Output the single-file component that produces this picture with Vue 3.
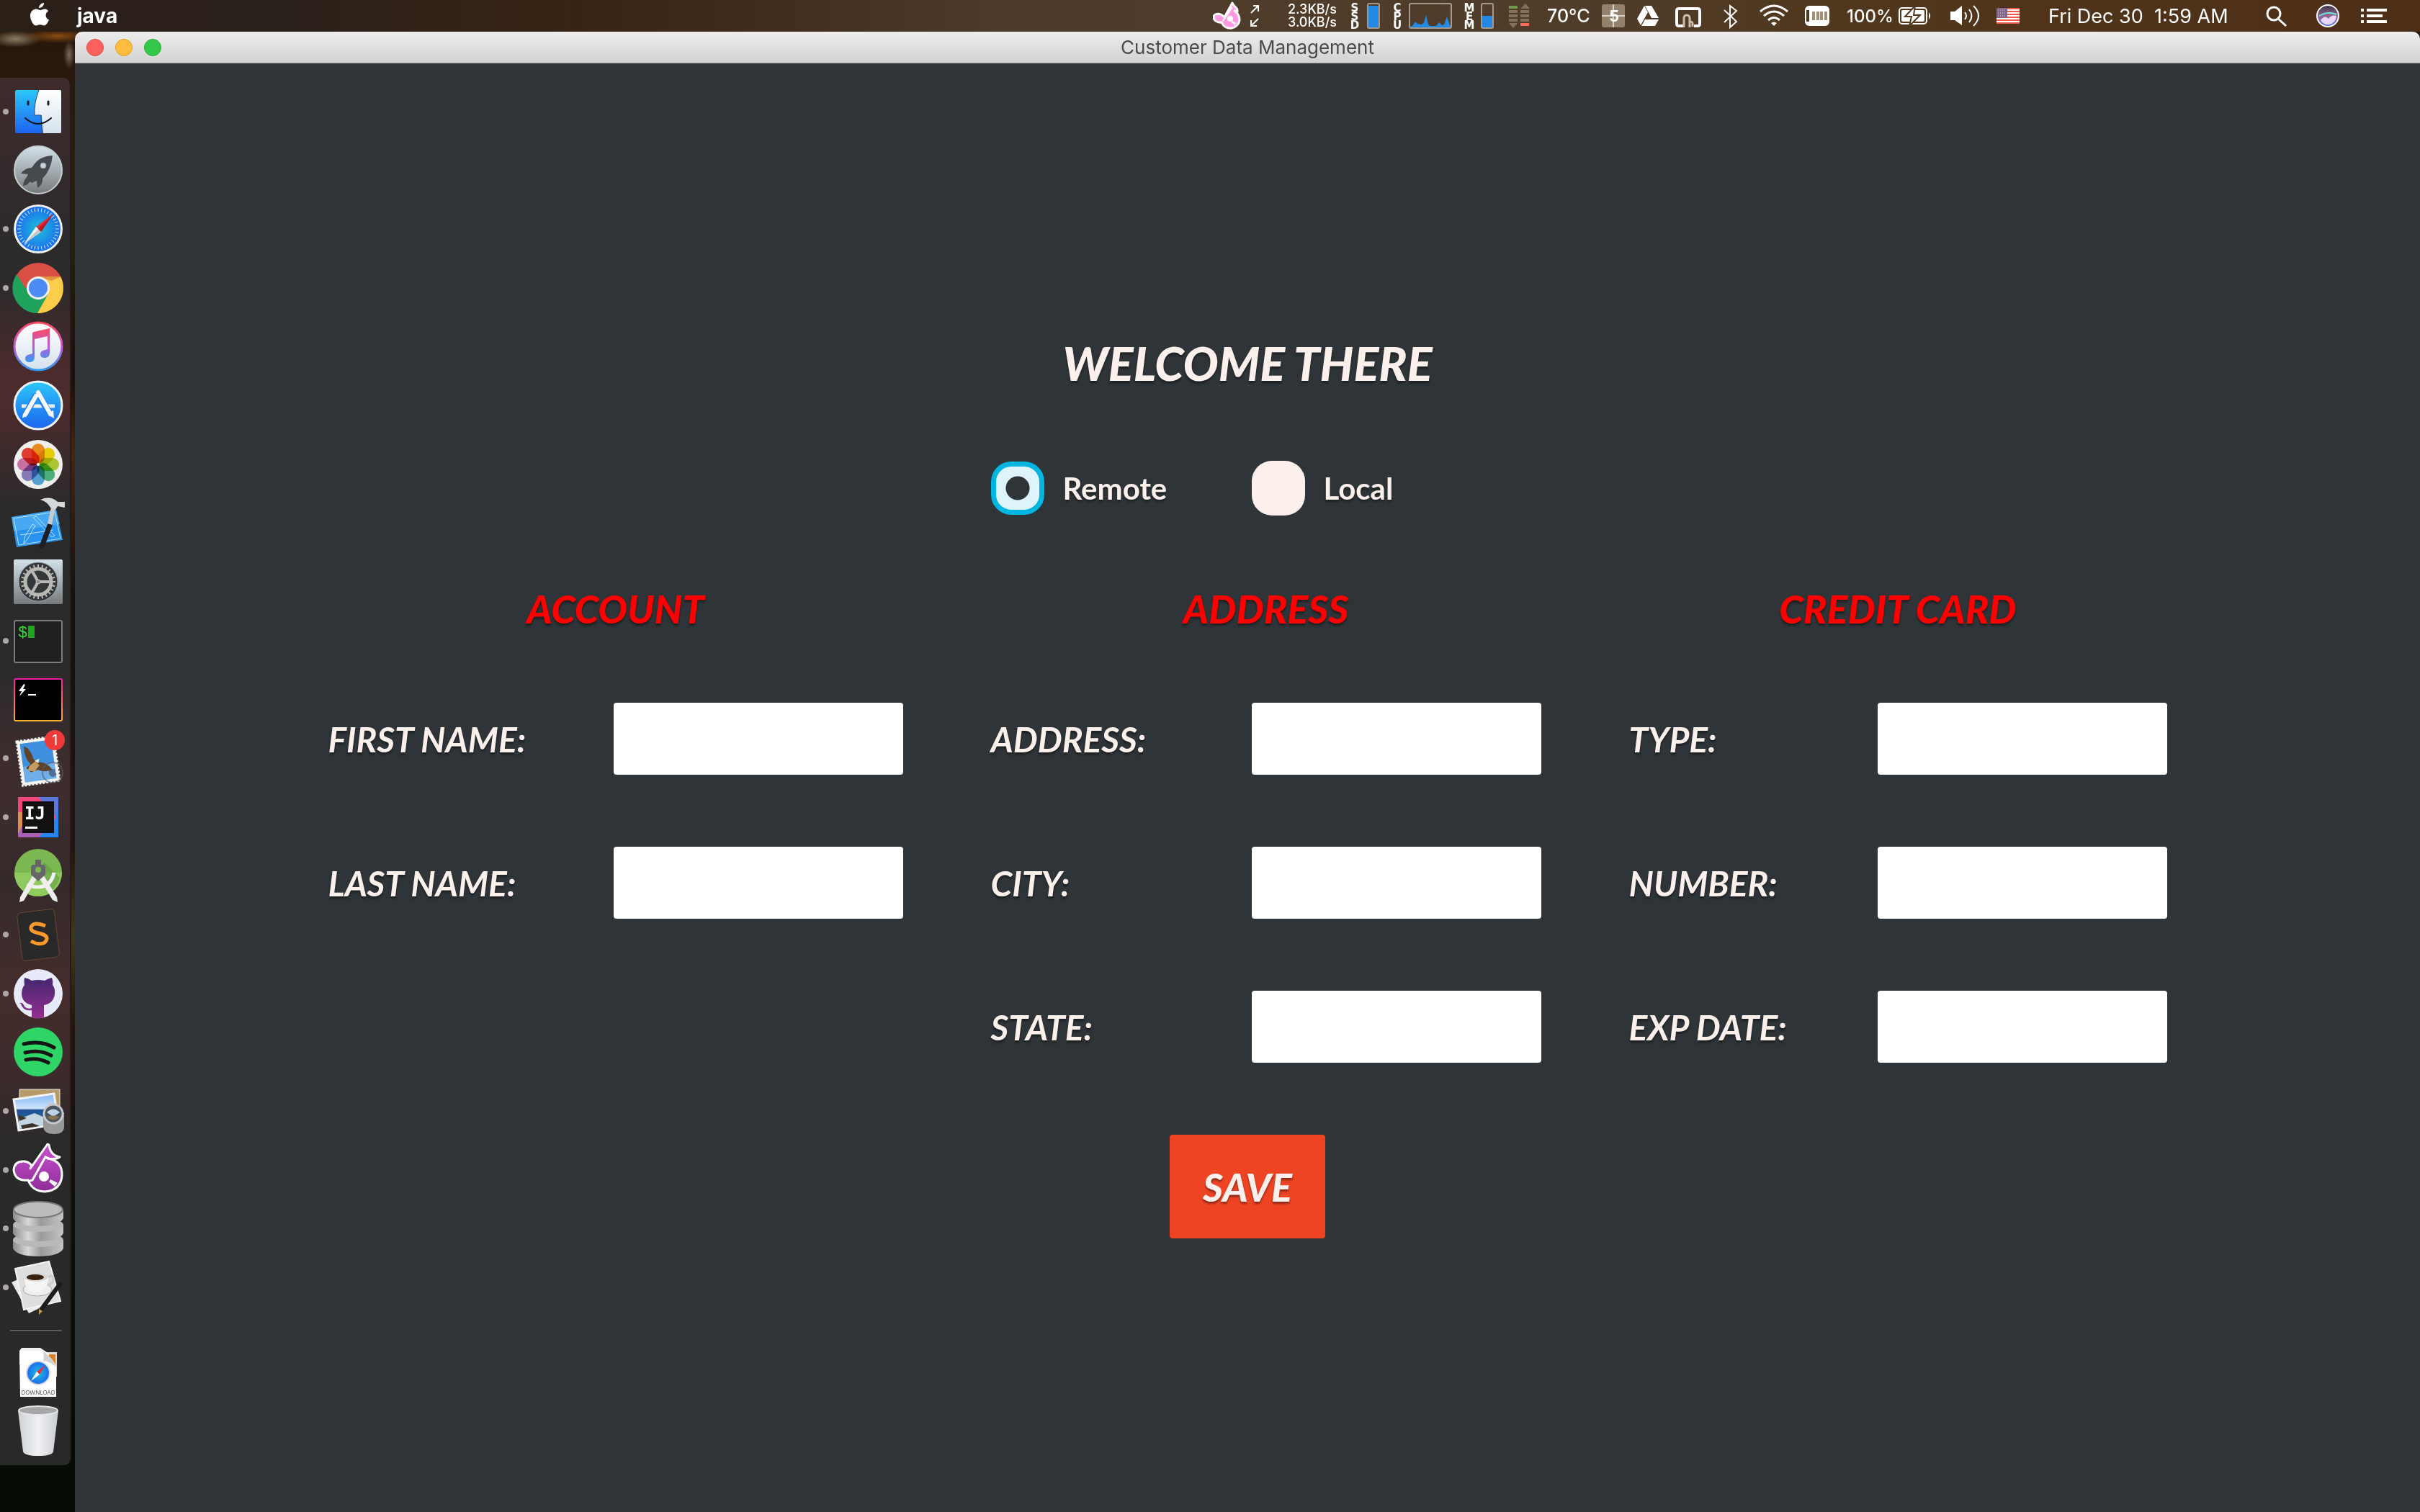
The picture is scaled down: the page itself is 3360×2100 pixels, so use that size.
<script setup>
import { ref, reactive } from 'vue'

const source = ref('remote')

const groups = reactive([
  {
    id: 'account',
    title: 'ACCOUNT',
    fields: [
      { id: 'first-name', label: 'FIRST NAME:', value: '' },
      { id: 'last-name', label: 'LAST NAME:', value: '' }
    ]
  },
  {
    id: 'address',
    title: 'ADDRESS',
    fields: [
      { id: 'street', label: 'ADDRESS:', value: '' },
      { id: 'city', label: 'CITY:', value: '' },
      { id: 'state', label: 'STATE:', value: '' }
    ]
  },
  {
    id: 'card',
    title: 'CREDIT CARD',
    fields: [
      { id: 'card-type', label: 'TYPE:', value: '' },
      { id: 'card-number', label: 'NUMBER:', value: '' },
      { id: 'card-exp', label: 'EXP DATE:', value: '' }
    ]
  }
])

const petals = ['#f7941e', '#f5d90a', '#b5d334', '#52b985', '#5aa9e0', '#8f83c4', '#d678b0', '#ef4136']
const ticks = Array.from({ length: 36 }, (_, i) => i * 10)
const teeth = Array.from({ length: 24 }, (_, i) => i * 15)
</script>

<template>
  <div class="desktop">
    <header class="menubar">
      <svg class="apple" width="44" height="44" viewBox="0 0 44 44" aria-label="Apple">
        <path fill="#fff" d="M27 4c.3 4-3 7-7 7C20 8 23 4.300 27 4zM33 15.500c-5 3-4.500 9.500 1 12-1 3-4 8-7 8-2 0-3-1.200-5.500-1.200S18 35.500 16 35.500c-4 0-8-8-8-13.500 0-6 4-9.500 8-9.500 2.500 0 4 1.400 6 1.400s3.500-1.500 6.500-1.500c2 0 3.700 1 4.500 3.100z" />
      </svg>
      <strong class="app-name">java</strong>
      <div class="status">
        <svg width="52" height="44" viewBox="0 0 52 44">
          <path d="M16 24 27 4c2 6 8 6 7 12l-4-1c6 4 7 9 7 13a13 13 0 0 1-25 3C6 32 1 28 1 24s7-8 15 0z" fill="#ff9ae0" stroke="#fff" stroke-width="3" stroke-linejoin="round" />
          <path d="M14 29 27 10" stroke="#fff" stroke-width="2" /><circle cx="24" cy="26" r="4" fill="#fff" /><path d="m27 29 5 3-2 3-4-4z" fill="#fff" />
        </svg>
        <svg width="52" height="44" viewBox="0 0 52 44" fill="none" stroke="#fff" stroke-width="2">
          <path d="M1 18 11 8M4 8h7v8M11 26 1 36M1 28v8h8" />
        </svg>
        <div class="speeds"><span>2.3KB/s</span><span>3.0KB/s</span></div>
        <svg width="60" height="44" viewBox="0 0 60 44">
          <g class="gauge-text"><text x="9" y="16">S</text><text x="9" y="28">S</text><text x="9" y="40">D</text></g>
          <rect x="27" y="5" width="16" height="34" rx="2" class="gauge-box" /><rect x="28" y="8" width="14" height="30" fill="#2389e4" />
        </svg>
        <svg width="100" height="44" viewBox="0 0 100 44">
          <g class="gauge-text"><text x="8" y="16">C</text><text x="8" y="28">P</text><text x="8" y="40">U</text></g>
          <path fill="#2389e4" d="M25 38v-1l4-1 4-6 3 3 6 1 3-3 3-10 3 13 3 2h8l4-5 4 4 3-1 4-11 4 12 2 1v2z" />
          <rect x="25" y="5" width="58" height="34" rx="2" class="gauge-box" />
        </svg>
        <svg width="60" height="44" viewBox="0 0 60 44">
          <g class="gauge-text"><text x="8" y="16">M</text><text x="8" y="28">E</text><text x="8" y="40">M</text></g>
          <rect x="25" y="5" width="16" height="34" rx="2" class="gauge-box" /><rect x="26" y="22" width="14" height="16" fill="#2389e4" />
        </svg>
        <svg width="56" height="44" viewBox="0 0 56 44" fill="#85705b">
          <path fill="#729a4e" d="M3 8h12v4H3z" /><path d="M3 14h12v4H3zM3 20h12v4H3zM3 26h12v4H3zM3 32h12l-6 7zM19 12h13l-6-7zM19 14h12v4H19zM19 20h12v4H19zM19 26h12v4H19z" /><path fill="#ff6b57" d="M19 32h12v4H19z" />
        </svg>
        <span class="text-temp">70°C</span>
        <svg width="48" height="44" viewBox="0 0 48 44">
          <rect y="6" width="32" height="32" rx="3" fill="#94816b" /><path d="M16 6v32M0 22h32" stroke="#d9cfc4" stroke-width="2" />
          <text x="17" y="30" text-anchor="middle" class="space-text">5</text>
        </svg>
        <svg width="52" height="44" viewBox="0 0 52 44" fill="#fff">
          <path d="m11 8-10 18 5 9 10-18zM12 8h9l10 17H21zM12 27h19l-5 9H7z" />
        </svg>
        <svg width="68" height="44" viewBox="0 0 68 44" fill="none">
          <path d="M15 36H7q-3 0-3-3V15q0-3 3-3h26q3 0 3 3v18q0 3-3 3h-5" stroke="#fff" stroke-width="4" />
          <path d="M14 38V25a4 4 0 0 1 8 0v13M22 31q4-2 4 2v4" stroke="#cdbfae" stroke-width="3" />
        </svg>
        <svg width="48" height="44" viewBox="0 0 48 44" fill="none" stroke="#fff" stroke-width="2">
          <path d="m2 14 17 16-9 8V8l9 7L2 31" />
        </svg>
        <svg width="64" height="44" viewBox="0 0 64 44" fill="none" stroke="#fff" stroke-width="3">
          <path d="M4 16q19-16 38 0M9 22q14-12 28 0M15 28q8-7 16 0" /><path d="m19 32 4 4 4-4q-4-3-8 0z" fill="#fff" stroke="none" />
        </svg>
        <svg width="60" height="44" viewBox="0 0 60 44">
          <rect x="2" y="8" width="34" height="28" rx="6" fill="#fff" /><path d="M4 14h4v16H4z" fill="#50381f" />
          <path d="M12 16h4v12h-4zM18 16h4v12h-4zM23 16h4v12h-4zM29 16h4v12h-4z" fill="#a28d75" />
        </svg>
        <span class="text-charge">100%</span>
        <svg width="72" height="44" viewBox="0 0 72 44">
          <rect x="1" y="11" width="38" height="22" rx="4" fill="none" stroke="#fff" stroke-width="2" /><path d="M42 17q4 5 0 10z" fill="#fff" />
          <rect x="4" y="14" width="32" height="16" rx="2" fill="#fff" /><path d="m23 8-14 15h9l-3 13 15-15h-9z" fill="#fff" stroke="#50381f" stroke-width="2" />
        </svg>
        <svg width="64" height="44" viewBox="0 0 64 44" fill="none" stroke="#fff" stroke-width="2">
          <path d="M0 16h6l10-8v27L6 28H0z" fill="#fff" stroke="none" /><path d="M20 17q4 5 0 10M26 13q7 9 0 18M32 8q14 14 0 28" />
        </svg>
        <svg width="72" height="44" viewBox="0 0 72 44">
          <path fill="#fff" d="M0 11h32v22H0z" /><path d="M0 12h32M0 16h32M0 20h32M0 24h32M0 28h32M0 32h32" stroke="#f25a4c" stroke-width="2" />
          <path fill="#83668a" d="M0 11h15v14H0z" /><path d="M2 14h12M2 18h12M2 22h12" stroke="#e4dbe8" stroke-dasharray="1 2" />
        </svg>
        <span class="text-date">Fri Dec 30&nbsp; 1:59 AM</span>
        <svg width="70" height="44" viewBox="0 0 70 44" fill="none" stroke="#fff" stroke-width="3">
          <circle cx="11" cy="19" r="9" /><path d="m17 26 11 10" />
        </svg>
        <svg width="62" height="44" viewBox="0 0 62 44">
          <circle cx="16" cy="22" r="15" fill="url(#siri)" stroke="#fff" stroke-width="2" />
          <path d="M6 28q6-8 11-2 4-6 11-4-1 10-10 12Q10 35 6 28z" fill="#f6e2ff" opacity=".9" /><path d="M4 22q12-7 24-2" stroke="#6fe6e0" stroke-width="2" fill="none" />
        </svg>
        <svg width="82" height="44" viewBox="0 0 82 44" stroke="#fff" stroke-width="4">
          <path d="M0 14h4M8 14h28M0 22h4M8 22h22M0 30h4M8 30h28" />
        </svg>
      </div>
    </header>

    <div class="workspace">
      <nav class="dock" aria-label="Dock">
        <ul class="dock-list">
          <li class="running">
            <svg viewBox="0 0 80 82">
              <defs>
                <linearGradient id="blue" x2="0" y2="1"><stop stop-color="#2cc8fb" /><stop offset="1" stop-color="#1d63f0" /></linearGradient>
                <linearGradient id="steel" x2="0" y2="1"><stop stop-color="#d3e2ea" /><stop offset="1" stop-color="#77797b" /></linearGradient>
                <linearGradient id="white" x2="0" y2="1"><stop stop-color="#fff" /><stop offset="1" stop-color="#d5e2ee" /></linearGradient>
                <linearGradient id="tune" x2="0" y2="1"><stop stop-color="#fb4a5c" /><stop offset=".55" stop-color="#b85ce0" /><stop offset="1" stop-color="#2f9cf0" /></linearGradient>
                <linearGradient id="hyper" x2="0" y2="1"><stop stop-color="#f81fa8" /><stop offset="1" stop-color="#f5b32d" /></linearGradient>
                <linearGradient id="purple" x2="0" y2="1"><stop stop-color="#44276f" /><stop offset="1" stop-color="#93308f" /></linearGradient>
                <linearGradient id="orchid" x2="0" y2="1"><stop stop-color="#c951cf" /><stop offset="1" stop-color="#8e2d98" /></linearGradient>
                <linearGradient id="metal"><stop stop-color="#8b8b8b" /><stop offset=".3" stop-color="#d8d8d8" /><stop offset=".55" stop-color="#9a9a9a" /><stop offset="1" stop-color="#c4c4c4" /></linearGradient>
                <linearGradient id="bin"><stop stop-color="#cdd0d4" /><stop offset=".5" stop-color="#f0f1f3" /><stop offset="1" stop-color="#c9ccd1" /></linearGradient>
                <linearGradient id="sea" x2="0" y2="1"><stop stop-color="#7fb6f5" /><stop offset=".4" stop-color="#cfe4fa" /><stop offset=".45" stop-color="#1c4f93" /><stop offset="1" stop-color="#2e7fa8" /></linearGradient>
                <linearGradient id="siri" x2="0" y2="1"><stop stop-color="#3c3348" /><stop offset=".5" stop-color="#94648f" /><stop offset="1" stop-color="#5a7df0" /></linearGradient>
                <radialGradient id="compass"><stop stop-color="#1fc0d8" /><stop offset="1" stop-color="#1a6ef0" /></radialGradient>
              </defs>
              <rect x="8" y="11" width="64" height="60" rx="2" fill="url(#blue)" />
              <path d="M41 11h29q2 0 2 2v56q0 2-2 2H47q-2-12-2-25H35q-1-18 6-35z" fill="url(#white)" />
              <path d="M41 11q-7 18-6 35h9q0 13 2 25" fill="none" stroke="#294a72" stroke-width="1" />
              <path d="M26 27v4M54 27v4" stroke="#1a1a1a" stroke-width="3" stroke-linecap="round" />
              <path d="M22 50q18 16 36 0" fill="none" stroke="#111" stroke-width="2" stroke-linecap="round" />
            </svg>
          </li>
          <li>
            <svg viewBox="0 0 80 82">
              <circle cx="40" cy="41" r="33" fill="url(#steel)" stroke="#c6ced2" stroke-width="2" />
              <path fill="#454a4f" d="M60 21q-18 1-26 13l-3 4q-9 0-15 8l10 1-3 6 8 6 7-3 1 10q8-5 7-13 12-12 14-32zM26 50q-6 3-7 13 8-1 11-8z" />
              <circle cx="47" cy="35" r="4" fill="#c8d3d9" stroke="#8c979d" />
            </svg>
          </li>
          <li class="running">
            <svg viewBox="0 0 80 82">
              <circle cx="40" cy="41" r="34" fill="#eef1f4" /><circle cx="40" cy="41" r="31" fill="url(#compass)" />
              <path v-for="t in ticks" :key="t" d="M40 12v5" stroke="#cfe6fb" stroke-width="1" :transform="`rotate(${t} 40 41)`" />
              <path fill="#ed2f38" d="M61 20 37 38l7 7z" /><path fill="#fff" d="m37 38 7 7-24 17z" /><path fill="#c3c8cd" d="m40 41 4 4-24 17z" /><path fill="#b51c25" d="M61 20 40 41l4 4z" />
            </svg>
          </li>
          <li class="running">
            <svg viewBox="0 0 80 82">
              <circle cx="40" cy="41" r="35" fill="#da4f44" />
              <path fill="#1fa35c" d="M10 22a35 35 0 0 0 29 54l15-26-14-9-18 0z" /><path fill="#fccd48" d="M39 76a35 35 0 0 0 32-51H40l14 24z" />
              <path fill="#b93d33" d="m40 25 32 0-14 6z" opacity=".4" />
              <circle cx="40" cy="41" r="16" fill="#f3f3f3" /><circle cx="40" cy="41" r="13" fill="#4b8bf4" />
            </svg>
          </li>
          <li>
            <svg viewBox="0 0 80 82">
              <circle cx="40" cy="41" r="33" fill="url(#white)" stroke="url(#tune)" stroke-width="3" />
              <path fill="url(#tune)" d="M32 23q0-2 2-2l22-5v34q0 7-7 7-6 0-6-5 0-5 7-6l3-1V27l-18 4v25q0 7-7 7-6 0-6-5 0-5 7-6l3-1z" />
            </svg>
          </li>
          <li>
            <svg viewBox="0 0 80 82">
              <circle cx="40" cy="41" r="33" fill="url(#blue)" stroke="#eef4f8" stroke-width="3" />
              <path d="M17 42h46" stroke="#e8eff7" stroke-width="5" />
              <path d="m37 27-16 29M39 23l18 32" stroke="#1c84f0" stroke-width="9" /><path d="m37 28-15 26M40 23l17 30" stroke="#f6f8fb" stroke-width="6" stroke-linecap="round" />
              <path fill="#f6f8fb" d="m19 52-1 7 6-4zM54 51l7-3 1 11-7-4z" />
            </svg>
          </li>
          <li>
            <svg viewBox="0 0 80 82">
              <circle cx="40" cy="41" r="34" fill="#efefed" />
              <rect v-for="(c, i) in petals" :key="c" class="petal" x="31" y="12" width="18" height="28" rx="9" :fill="c" :transform="`rotate(${i * 45} 40 41)`" />
              <circle cx="40" cy="41" r="2" fill="#fff" />
            </svg>
          </li>
          <li>
            <svg viewBox="0 0 80 82">
              <path fill="#2a93ef" d="m3 33 62-10 9 42-64 10z" /><path fill="#63bdf7" opacity=".5" d="m3 33 62-10 5 20-64 10z" />
              <path fill="none" stroke="#b9e1fd" stroke-width="1" d="m6 35 57-9 8 37-58 9zM15 58l46-7M20 70l1-9 11-18 4 2-11 19zM33 34l4-2 26 27-4 2z" />
              <path d="m56 45-11 29" stroke="#1d1f22" stroke-width="7" stroke-linecap="round" /><path d="m61 20-5 23" stroke="#c9ccce" stroke-width="6" />
              <path fill="#d5d8da" d="M43 9q14-6 24 3l10 0 0 8-10-2-3 5-7-3q-4-8-14-11z" />
            </svg>
          </li>
          <li>
            <svg viewBox="0 0 80 82">
              <rect x="6" y="10" width="68" height="62" rx="2" fill="url(#steel)" /><circle cx="40" cy="41" r="27" fill="#35383b" stroke="#98a4ae" />
              <circle cx="40" cy="41" r="18" fill="none" stroke="#b8b8b5" stroke-width="5" />
              <path v-for="t in teeth" :key="t" d="M40 17v5" stroke="#b8b8b5" stroke-width="2" :transform="`rotate(${t} 40 41)`" />
              <path d="M40 41h18M40 41 31 25M40 41l-9 16" stroke="#b8b8b5" stroke-width="4" /><circle cx="40" cy="41" r="3" fill="#8d8d8b" stroke="#ccc" />
            </svg>
          </li>
          <li class="running">
            <svg viewBox="0 0 80 82">
              <rect x="7" y="13" width="66" height="58" rx="2" fill="#202020" stroke="#7c7c7c" stroke-width="2" />
              <text x="12" y="36" class="prompt">$</text><path fill="#1fa51f" d="M26 20h9v17h-9z" />
            </svg>
          </li>
          <li>
            <svg viewBox="0 0 80 82">
              <rect x="7" y="13" width="66" height="58" rx="2" fill="#000" stroke="url(#hyper)" stroke-width="2" />
              <path fill="#fff" d="m20 20-7 10h4l-3 7 9-10h-4l3-6zM26 34h11v2H26z" />
            </svg>
          </li>
          <li class="running">
            <svg viewBox="0 0 80 82">
              <g transform="rotate(-8 40 45)">
                <rect x="14" y="14" width="52" height="62" fill="#f4f4f2" stroke="#f4f4f2" stroke-width="3" stroke-dasharray="3 2" />
                <path fill="#3f8fdf" d="M18 18h44v54H18z" /><path fill="#8ec3f0" opacity=".6" d="M18 50h44v22H18z" />
                <path fill="#5d4327" d="M23 22q9 4 11 20l7 5q10 0 17 13-12 2-20-3l-10 2-6-7 7-4q-8-10-6-26z" /><path fill="#c49a62" d="m27 50 9-5 5 6-8 8-9-3z" /><path fill="#f3e8d5" d="m35 44 7-2-2 6z" />
              </g>
              <circle cx="60" cy="61" r="14" fill="none" stroke="#555e6e" stroke-width="2" opacity=".6" /><path fill="#44546c" opacity=".7" d="M55 57q5-2 9 0-2 5 2 6-6 8-11 0z" />
              <circle cx="63" cy="16" r="14" fill="#ee3b37" /><text x="63" y="23" text-anchor="middle" class="badge">1</text>
            </svg>
          </li>
          <li class="running">
            <svg viewBox="0 0 80 82">
              <path fill="#f5437b" d="M12 13h56v56H12z" /><path fill="#5b76dc" d="M40 13h28v30z" /><path fill="#2384f3" d="M68 30v39H30l30-14z" /><path fill="#a85fb4" d="M12 69h30l10-16-36-20z" /><path fill="#dd8f4b" d="M12 34h8v14l-8 16z" />
              <path fill="#111" d="M18 19h44v44H18z" /><path fill="#fff" d="M22 54h17v3H22z" /><text x="21" y="44" class="ij">IJ</text>
            </svg>
          </li>
          <li>
            <svg viewBox="0 0 80 82">
              <circle cx="40" cy="37" r="33" fill="#7cb852" /><path fill="#8fca5e" d="M7 37h66a33 33 0 0 1-66 0z" /><path fill="#5c9440" d="m48 22 22 22q-3 12-14 20L42 42z" opacity=".5" />
              <path d="M62 37q-4 20-23 20-8 0-14-4" stroke="#f2f2f2" stroke-width="5" fill="none" />
              <path fill="#eee" d="m34 38 6 4-20 34-6 2 1-7zM40 42l6-4 20 33 1 7-7-3z" />
              <path fill="#666" d="M36 19h8v7h4l2 3v11l-6 5-4 4-4-4-6-5V29l2-3h4z" /><circle cx="40" cy="33" r="4" fill="#7cb852" />
            </svg>
          </li>
          <li class="running">
            <svg viewBox="0 0 80 82">
              <rect x="14" y="8" width="52" height="67" rx="5" fill="#292929" stroke="#63492f" transform="rotate(-7 40 41)" />
              <path d="M50 29q-17-7-20 2c-2 10 23 6 22 16-2 9-14 8-22 3" fill="none" stroke="#fb9a2b" stroke-width="5" />
            </svg>
          </li>
          <li class="running">
            <svg viewBox="0 0 80 82">
              <circle cx="40" cy="41" r="34" fill="#e7eaf8" />
              <path fill="url(#purple)" d="M21 19q6 1 10 4 9-2 18 0 5-3 10-4 2 5 1 10 4 5 3 13-2 13-15 15v17q-8 3-17 0V64q-12 2-15-9l-2-1q5-1 7 5 4 4 10 2v-4q-13-3-14-15 0-8 4-13-1-5 0-10z" />
            </svg>
          </li>
          <li>
            <svg viewBox="0 0 80 82">
              <circle cx="40" cy="41" r="34" fill="#2fd566" />
              <path d="M20 30q24-6 42 5M22 42q20-5 36 4M23 52q17-4 31 4" fill="none" stroke="#141414" stroke-width="5" stroke-linecap="round" />
            </svg>
          </li>
          <li class="running">
            <svg viewBox="0 0 80 82">
              <path fill="#b79a68" stroke="#eee" d="M14 11h56v40H14z" />
              <path fill="url(#sea)" stroke="#f3f3f3" stroke-width="3" d="m6 25 56-8 6 42-55 9z" /><path fill="#e8f1f4" d="m13 52 22-8 14 6 8 10-44 6z" opacity=".8" /><path fill="#3d3328" d="m12 46 12 5-10 4zM16 61l16-3 10 4-24 4z" />
              <path fill="#97989a" d="M47 43v20q1 10 15 10t14-10V43z" /><circle cx="61" cy="45" r="13" fill="#4a5360" stroke="#c7c8ca" stroke-width="3" /><path fill="#bdd2e6" d="M52 43q9-9 18 0l-9 6z" /><path fill="#87714f" d="M52 49q9-3 18 0-9 9-18 0z" />
            </svg>
          </li>
          <li class="running">
            <svg viewBox="0 0 80 82">
              <path d="M29 39 53 5l2 1q2 15 15 17-6 4-17 2 21 3 20 24-2 20-23 22-18 0-24-16-18 2-20-14 1-13 15-12 7 1 10 6z" fill="url(#orchid)" stroke="#fff" stroke-width="3" stroke-linejoin="round" />
              <path d="M26 57 32 55 50 23l5 2" fill="none" stroke="#fff" stroke-width="3" /><circle cx="48" cy="50" r="7" fill="#fff" /><path fill="#fff" d="m57 54 10 5-4 5-8-7z" />
            </svg>
          </li>
          <li class="running">
            <svg viewBox="0 0 80 82">
              <path fill="url(#metal)" d="M5 57v12q6 11 35 11t35-11V57z" /><ellipse cx="40" cy="57" rx="35" ry="10" fill="#b9b9b9" />
              <path fill="url(#metal)" d="M5 36v12q6 11 35 11t35-11V36z" /><ellipse cx="40" cy="36" rx="35" ry="10" fill="#b9b9b9" />
              <path fill="url(#metal)" d="M5 15v12q6 11 35 11t35-11V15z" /><ellipse cx="40" cy="15" rx="34" ry="11" fill="#bcbcbc" stroke="#777" stroke-width="2" />
            </svg>
          </li>
          <li class="running">
            <svg viewBox="0 0 80 82">
              <path fill="#e9e9e7" d="m3 34 42-20 26 42-44 21z" /><path fill="#dededc" stroke="#f5f5f3" stroke-width="2" d="m8 15 47-10 16 55-51 12z" />
              <ellipse cx="39" cy="44" rx="20" ry="9" fill="#eee" stroke="#a9a9a9" /><path d="M54 27q7-5 7 2 0 7-9 9" fill="none" stroke="#ccc" stroke-width="3" />
              <path fill="#f4f4f4" d="M21 27q0 19 13 20h6q14-2 14-20z" /><ellipse cx="37" cy="27" rx="16" ry="6" fill="#d8d8d8" /><ellipse cx="36" cy="27" rx="12" ry="4" fill="#392210" />
              <path d="M72 34 44 72" stroke="#1b1b1b" stroke-width="6" /><path fill="#c29c53" d="m41 71 5 3-5 5z" />
            </svg>
          </li>
        </ul>
        <hr class="dock-rule">
        <ul class="dock-list short">
          <li>
            <svg viewBox="0 0 80 82">
              <path fill="#ddd" d="M45 11h21v34H45z" /><path fill="#d9812c" d="M48 14h16v20H48z" />
              <path fill="#f1f1f1" d="M17 5h26l12 8v15H14V9z" /><path fill="#fff" d="M14 9h32q16 12 19 22v42H15z" /><path fill="#d3d3d3" d="M46 9q16 12 19 23-8-8-18-9 2-8-1-14z" />
              <circle cx="40" cy="40" r="17" fill="#d7dbe0" /><circle cx="40" cy="40" r="15" fill="url(#compass)" /><path fill="#ed2f38" d="M50 29 38 38l4 4z" /><path fill="#fff" d="m38 38 4 4-12 9z" />
              <text x="40" y="70" text-anchor="middle" class="download">DOWNLOAD</text>
            </svg>
          </li>
          <li>
            <svg viewBox="0 0 80 82">
              <path fill="url(#bin)" d="M12 11q28 12 56 0l-7 57q-2 6-21 6t-21-6z" /><ellipse cx="40" cy="11" rx="27" ry="6" fill="#a5a7a9" stroke="#e4e5e7" stroke-width="2" />
            </svg>
          </li>
        </ul>
      </nav>

      <section class="window">
        <div class="titlebar">
          <div class="lights">
            <button class="light close" type="button" aria-label="Close"></button>
            <button class="light minimise" type="button" aria-label="Minimise"></button>
            <button class="light zoom" type="button" aria-label="Zoom"></button>
          </div>
          <span class="window-title">Customer Data Management</span>
        </div>

        <form class="form" @submit.prevent>
          <h1>WELCOME THERE</h1>
          <div class="choices" role="radiogroup" aria-label="Source">
            <label class="choice"><input v-model="source" type="radio" name="source" value="remote">Remote</label>
            <label class="choice"><input v-model="source" type="radio" name="source" value="local">Local</label>
          </div>
          <section v-for="group in groups" :key="group.id" class="group" :aria-labelledby="group.id">
            <h2 :id="group.id">{{ group.title }}</h2>
            <div v-for="field in group.fields" :key="field.id" class="field">
              <label :for="field.id">{{ field.label }}</label>
              <input :id="field.id" v-model="field.value" type="text">
            </div>
          </section>
          <button class="save" type="submit">SAVE</button>
        </form>
      </section>
    </div>
  </div>
</template>

<style>
body {
  margin: 0;
  background: #0a0c08;
}
</style>

<style scoped>
.desktop {
  display: flex;
  flex-direction: column;
  min-height: 100vh;
  font-family: Inter, Roboto, sans-serif;
  background:
    radial-gradient(ellipse 50px 10px at 80px 50px, #8a4a12, transparent),
    radial-gradient(ellipse 36px 12px at 22px 54px, #8a7c62, transparent),
    radial-gradient(ellipse 8px 20px at 96px 76px, #7d6a58, transparent),
    linear-gradient(#24150a, #2a180b 5%, #2c200c 15%, #1c0f06 25%, #4a240a 30%, #14100a 40%, #24150a 56%, #3e3c10 62%, #2a1208 68%, #0c1006 80%, #050a05);
}

.menubar {
  display: flex;
  align-items: center;
  height: 44px;
  padding-left: 34px;
  color: #fff;
  font-size: 27px;
  background: linear-gradient(90deg, #2b2018, #2a201a 12%, #3a2413 25%, #4e3b29 42%, #4f3c29 65%, #50361a 80%, #4d2e17);
}

.menubar svg {
  flex: none;
  display: block;
}

.app-name {
  margin-left: 29px;
  font-size: 28px;
}

.status {
  display: flex;
  align-items: center;
  margin-left: auto;
  white-space: nowrap;
}

.speeds {
  display: flex;
  flex-direction: column;
  width: 84px;
  font-size: 18px;
  font-weight: 500;
  line-height: 18px;
}

.text-temp {
  width: 76px;
  font-size: 25px;
  font-weight: 500;
}

.text-charge {
  width: 72px;
  font-size: 24px;
  font-weight: 500;
}

.text-date {
  width: 302px;
}

.gauge-text {
  fill: #fff;
  font: bold 15px "DejaVu Sans", sans-serif;
  text-anchor: middle;
}

.gauge-box {
  fill: none;
  stroke: #a39a8f;
  stroke-width: 2;
}

.space-text {
  fill: #fff;
  font: bold 22px Inter, sans-serif;
}

.workspace {
  display: flex;
  flex: 1;
}

.dock {
  box-sizing: border-box;
  display: flex;
  flex-direction: column;
  width: 99px;
  margin: 64px 5px 65px 0;
  padding: 6px 0 5px;
  border-right: 2px solid #211b1c;
  border-radius: 0 10px 10px 0;
  background: linear-gradient(#402b2c, #2b2a2b 12%, #2d2a2b 15%, #4b2b2b 21%, #4b2b2b 24%, #2b2a2b 31%, #2a2a2b 42%, #3f2d2e 50%, #352a2b 58%, #452c2c 66%, #3c2a2b 72%, #2a2a2a 77%, #292929);
}

.dock-list {
  display: flex;
  flex: 21;
  flex-direction: column;
  margin: 0;
  padding: 0;
  list-style: none;
}

.dock-list.short {
  flex: 2;
}

.dock-list li {
  display: flex;
  flex: 1;
  align-items: center;
  min-height: 0;
}

.dock-list li::before {
  content: "";
  width: 8px;
  height: 8px;
  margin: 0 1px 0 4px;
  border-radius: 50%;
}

.dock-list li.running::before {
  background: #ada6a6;
}

.dock-list svg {
  flex: none;
  width: 80px;
  height: 82px;
  margin: -4px 0;
  overflow: visible;
}

.dock-rule {
  width: 72px;
  height: 2px;
  margin: 18px 0 18px 14px;
  border: 0;
  background: #5c5c5c;
}

.petal {
  mix-blend-mode: multiply;
}

.prompt {
  fill: #2be02b;
  font: 22px "Liberation Mono", monospace;
}

.badge {
  fill: #fff;
  font: 20px Inter, sans-serif;
}

.ij {
  fill: #fff;
  font: bold 24px "DejaVu Sans Mono", monospace;
}

.download {
  fill: #555;
  font: 8px Inter, sans-serif;
}

.window {
  display: flex;
  flex: 1;
  flex-direction: column;
  overflow: hidden;
  border-radius: 10px 10px 0 0;
  background: #2e3438;
}

.titlebar {
  box-sizing: border-box;
  display: grid;
  grid-template-columns: 1fr auto 1fr;
  align-items: center;
  height: 44px;
  padding: 0 16px;
  border-bottom: 1px solid #aaa;
  background: linear-gradient(#ededed, #d2d2d2);
}

.lights {
  display: flex;
  gap: 16px;
}

.light {
  box-sizing: border-box;
  width: 24px;
  height: 24px;
  padding: 0;
  border: 1px solid #e2463f;
  border-radius: 50%;
  background: #fc605c;
}

.light.minimise {
  border-color: #dfa023;
  background: #fdbc40;
}

.light.zoom {
  border-color: #27aa35;
  background: #34c84a;
}

.window-title {
  color: #4a4a4a;
  font-size: 26px;
}

.form {
  display: grid;
  flex: 1;
  grid-template-columns: 798px 764px 747px;
  gap: 100px 122px;
  place-content: center;
  color: #fcf0ec;
  font-family: Lato, sans-serif;
  font-weight: 700;
  text-shadow: 0 3px 3px rgba(0, 0, 0, 0.4);
}

h1 {
  grid-column: 1 / -1;
  margin: 0;
  font-size: 65px;
  font-style: italic;
  font-weight: 900;
  line-height: 72px;
  text-align: center;
}

.choices {
  display: grid;
  grid-column: 2;
  grid-template-columns: 362px 1fr;
}

.choice {
  display: flex;
  gap: 26px;
  align-items: center;
  font-size: 42px;
}

.choice input {
  box-sizing: border-box;
  width: 74px;
  height: 76px;
  margin: 0;
  border-radius: 28px;
  background: #fcf0ec;
  appearance: none;
}

.choice input:checked {
  height: 74px;
  border: 7px solid #00b5e0;
  background: radial-gradient(circle, #2e3438 16px, #def4fb 17px);
}

.group {
  display: flex;
  flex-direction: column;
  gap: 100px;
  grid-row: 3;
}

h2 {
  margin: 0;
  color: #f00;
  font-size: 54px;
  font-style: italic;
  font-weight: 900;
  line-height: 60px;
  text-align: center;
}

.field {
  display: flex;
  align-items: center;
  justify-content: space-between;
  font-size: 48px;
  font-style: italic;
}

.field input {
  box-sizing: border-box;
  width: 402px;
  height: 100px;
  padding: 0 20px;
  border: 0;
  border-radius: 4px;
  font-size: 42px;
  background: #fff;
}

.save {
  grid-column: 1 / -1;
  justify-self: center;
  width: 216px;
  height: 144px;
  padding: 0;
  border: 0;
  border-radius: 4px;
  color: #fcf0ec;
  font: italic 900 54px Lato, sans-serif;
  text-shadow: inherit;
  background: #ee4424;
}
</style>
